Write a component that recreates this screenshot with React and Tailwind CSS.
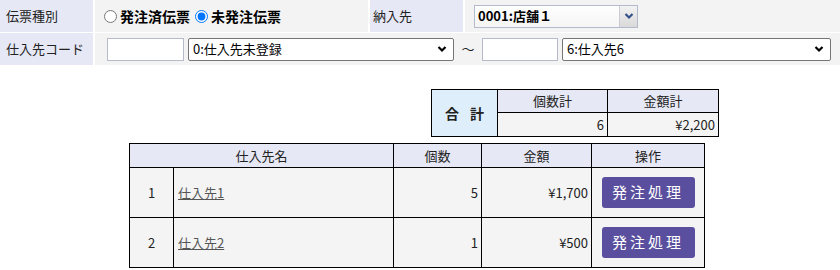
import { useState } from 'react'

const FONT = { fontFamily: '"Noto Sans CJK JP", "Liberation Sans", sans-serif' }

function Chevron({ className = 'text-black' }) {
  return (
    <svg className={`w-[10px] h-[8px] ${className}`} viewBox="0 0 10 8" fill="none" stroke="currentColor" strokeWidth={2.2}>
      <path d="M1.5 2l3.5 3.5L8.5 2" />
    </svg>
  )
}

function FakeSelect({ value, width }) {
  return (
    <div className={`${width} h-[23px] flex items-center justify-between bg-white border border-[#767676] rounded-[2px] pl-[4px] pr-[6px] text-[13px] text-black`}>
      <span>{value}</span>
      <Chevron />
    </div>
  )
}

function TextBox({ width }) {
  return <div className={`${width} h-[23px] bg-white border border-[#b7bacb]`} />
}

const SUPPLIERS = [
  { no: 1, name: '仕入先1', qty: 5, amount: '¥1,700' },
  { no: 2, name: '仕入先2', qty: 1, amount: '¥500' },
]

export default function App() {
  const [kind, setKind] = useState('unordered')

  return (
    <div className="w-[840px] h-[270px] bg-white overflow-hidden text-[#222]" style={FONT}>
      {/* search form */}
      <div className="flex flex-col gap-[1px]">
        <div className="flex h-[32px] gap-[2px]">
          <div className="w-[93px] bg-[#e6e8f5] flex items-center px-[6px] text-[13px]">伝票種別</div>
          <div className="w-[273px] bg-[#f3f3f3] flex items-center pl-[9px] text-[14px] font-bold text-black">
            <label className="flex items-center gap-[3px]">
              <input type="radio" name="kind" className="w-[13px] h-[13px] m-0" checked={kind === 'ordered'} onChange={() => setKind('ordered')} />
              発注済伝票
            </label>
            <label className="flex items-center gap-[3px] ml-[5px]">
              <input type="radio" name="kind" className="w-[13px] h-[13px] m-0" checked={kind === 'unordered'} onChange={() => setKind('unordered')} />
              未発注伝票
            </label>
          </div>
          <div className="w-[93px] bg-[#e6e8f5] flex items-center px-[3px] text-[13px]">納入先</div>
          <div className="flex-1 bg-[#f3f3f3] flex items-center pl-[9px]">
            <div className="w-[164px] h-[23px] flex border border-[#b4b9cc] bg-gradient-to-b from-white to-[#f4f4f4]">
              <div className="flex-1 flex items-center pl-[3px] text-[13px] font-semibold text-black">0001:店舗１</div>
              <div className="w-[18px] border-l border-[#c9cbd6] bg-gradient-to-b from-[#f2f2f2] to-[#d9d9d9] flex items-center justify-center">
                <Chevron className="text-[#34508a]" />
              </div>
            </div>
          </div>
        </div>

        <div className="flex h-[32px] gap-[2px]">
          <div className="w-[93px] bg-[#e6e8f5] flex items-center px-[6px] text-[13px]">仕入先コード</div>
          <div className="flex-1 bg-[#f3f3f3] flex items-center pl-[12px] gap-[4px]">
            <TextBox width="w-[77px]" />
            <FakeSelect value="0:仕入先未登録" width="w-[266px]" />
            <span className="w-[20px] text-center text-[13px]">〜</span>
            <TextBox width="w-[76px]" />
            <FakeSelect value="6:仕入先6" width="w-[269px]" />
          </div>
        </div>
      </div>

      {/* totals */}
      <div className="ml-[431px] mt-[24px] flex">
        <table className="border-collapse border border-black text-[13px]">
          <tbody>
            <tr className="h-[23px]">
              <td rowSpan={2} className="w-[66px] border border-black bg-[#deeefa] text-center font-bold text-[14px] tracking-[4px] pl-[4px]">合 計</td>
              <td className="w-[110px] border border-black bg-[#e6e8f5] text-center">個数計</td>
              <td className="w-[111px] border border-black bg-[#e6e8f5] text-center">金額計</td>
            </tr>
            <tr className="h-[24px]">
              <td className="border border-black bg-[#f4f4f4] text-right pr-[3px]">6</td>
              <td className="border border-black bg-[#f4f4f4] text-right pr-[3px]">¥2,200</td>
            </tr>
          </tbody>
        </table>
      </div>

      {/* supplier list */}
      <table className="ml-[129px] mt-[6px] border-collapse border border-black text-[13px]">
        <thead>
          <tr className="h-[24px] bg-[#e6e8f5]">
            <th colSpan={2} className="border border-black font-normal text-center">仕入先名</th>
            <th className="w-[88px] border border-black font-normal text-center">個数</th>
            <th className="w-[110px] border border-black font-normal text-center">金額</th>
            <th className="w-[113px] border border-black font-normal text-center">操作</th>
          </tr>
        </thead>
        <tbody>
          {SUPPLIERS.map(s => (
            <tr key={s.no} className="h-[50px] bg-[#f4f4f4]">
              <td className="w-[44px] border border-black text-center">{s.no}</td>
              <td className="w-[220px] border border-black pl-[4px]">
                <a href="#" className="underline text-[#555]">{s.name}</a>
              </td>
              <td className="border border-black text-right pr-[3px]">{s.qty}</td>
              <td className="border border-black text-right pr-[3px]">{s.amount}</td>
              <td className="border border-black text-center">
                <button className="w-[93px] h-[31px] rounded-[3px] bg-[#5a4f9e] text-white text-[15px] tracking-[3px]">発注処理</button>
              </td>
            </tr>
          ))}
        </tbody>
      </table>
    </div>
  )
}
